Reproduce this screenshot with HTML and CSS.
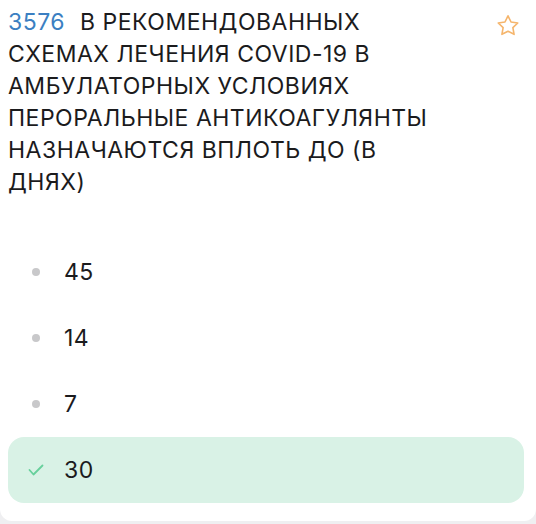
FILE: index.html
```html
<!DOCTYPE html>
<html lang="ru">
<head>
  <meta charset="UTF-8" />
  <meta name="viewport" content="width=device-width, initial-scale=1.0" />
  <title>Вопрос 3576</title>
  <link rel="stylesheet" href="styles.css">
</head>
<body>
  <div class="card">
    <div class="question">
      <p class="question-text"><span class="num">3576</span> В РЕКОМЕНДОВАННЫХ СХЕМАХ ЛЕЧЕНИЯ COVID-19 В АМБУЛАТОРНЫХ УСЛОВИЯХ ПЕРОРАЛЬНЫЕ АНТИКОАГУЛЯНТЫ НАЗНАЧАЮТСЯ ВПЛОТЬ ДО (В ДНЯХ)</p>
      <button class="fav" aria-label="В избранное">
        <svg width="26" height="26" viewBox="0 0 24 24" fill="none" stroke="#f5b56c" stroke-width="1.5" stroke-linejoin="round">
          <path d="M12 2.6l2.8 5.7 6.2.9-4.5 4.3 1.1 6.2L12 16.8l-5.6 2.9 1.1-6.2-4.5-4.3 6.2-.9z"/>
        </svg>
      </button>
    </div>
    <ul class="answers">
      <li class="answer"><span class="mark dot"></span>45</li>
      <li class="answer"><span class="mark dot"></span>14</li>
      <li class="answer"><span class="mark dot"></span>7</li>
      <li class="answer correct">
        <span class="mark">
          <svg width="16" height="12" viewBox="0 0 16 12" fill="none" stroke="#67d09c" stroke-width="1.8" stroke-linecap="round" stroke-linejoin="round"><path d="M1.5 6l4 4.5L14.5 1.5"/></svg>
        </span>30
      </li>
    </ul>
  </div>
</body>
</html>
```

FILE: styles.css
```css
* {
  margin: 0;
  padding: 0;
  box-sizing: border-box;
}
body {
  background: #efeff1;
  font-family: 'Inter', 'Noto Sans', sans-serif;
  color: #1b1b1d;
}
.card {
  background: #fff;
  border-radius: 0 0 12px 12px;
  padding: 6px 12px 18px 8px;
}
.question {
  display: flex;
  align-items: flex-start;
}
.question-text {
  width: 440px;
  font-size: 23px;
  line-height: 32px;
  letter-spacing: 0.5px;
}
.num {
  color: #3b7fc2;
  margin-right: 8px;
}
.fav {
  margin-left: auto;
  margin-right: 3px;
  margin-top: 7px;
  background: none;
  border: none;
  width: 26px;
  height: 26px;
}
.answers {
  list-style: none;
  margin-top: 41px;
}
.answer {
  display: flex;
  align-items: center;
  height: 66px;
  padding-left: 20px;
  font-size: 23px;
  letter-spacing: 0.5px;
  border-radius: 16px;
}
.mark {
  width: 16px;
  height: 16px;
  margin-right: 20px;
  display: flex;
  align-items: center;
  justify-content: center;
}
.dot::before {
  content: "";
  width: 8px;
  height: 8px;
  border-radius: 50%;
  background: #c8c8ca;
}
.correct {
  background: #d9f2e6;
}
```
